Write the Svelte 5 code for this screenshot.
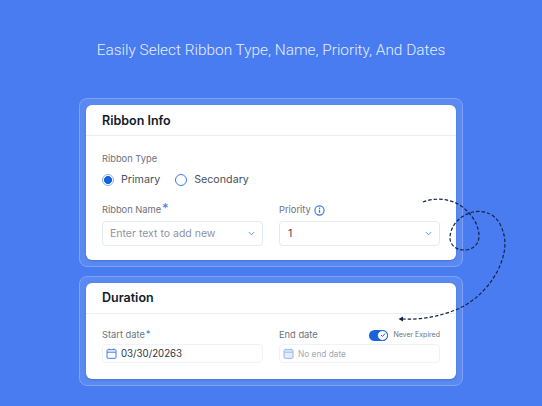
<script lang="ts">
  const typeOptions = [
    { label: 'Primary', checked: true },
    { label: 'Secondary', checked: false }
  ];
</script>

<main class="page">
  <h1>Easily Select Ribbon Type, Name, Priority, And Dates</h1>

  <section class="frame info-frame">
    <div class="card">
      <h2>Ribbon Info</h2>
      <div class="body info-body">
        <div class="label">Ribbon Type</div>
        <div class="radios">
          {#each typeOptions as opt}
            <span class="radio-item">
              <span class="radio" class:checked={opt.checked}></span>
              {opt.label}
            </span>
          {/each}
        </div>
        <div class="row">
          <div class="field">
            <div class="label label-line">Ribbon Name<span class="star big">*</span></div>
            <div class="select">
              <span class="placeholder">Enter text to add new</span>
              <svg class="chev" width="7" height="5" viewBox="0 0 8 5"><path d="M1 1l3 3 3-3" fill="none" stroke="#3b7de8" stroke-width="1"/></svg>
            </div>
          </div>
          <div class="field">
            <div class="label label-line">
              Priority
              <svg class="info" width="11" height="11" viewBox="0 0 11 11">
                <circle cx="5.5" cy="5.5" r="4.6" fill="none" stroke="#2f74e6" stroke-width="1.1"/>
                <path d="M5.5 4.800v3" stroke="#2f74e6" stroke-width="1.2"/>
                <circle cx="5.5" cy="3.300" r=".8" fill="#2f74e6"/>
              </svg>
            </div>
            <div class="select">
              <span class="value">1</span>
              <svg class="chev" width="7" height="5" viewBox="0 0 8 5"><path d="M1 1l3 3 3-3" fill="none" stroke="#3b7de8" stroke-width="1"/></svg>
            </div>
          </div>
        </div>
      </div>
    </div>
  </section>

  <section class="frame duration-frame">
    <div class="card">
      <h2 class="tight">Duration</h2>
      <div class="body row duration-body">
        <div class="field">
          <div class="label date-label">Start date<span class="star">*</span></div>
          <div class="date">
            <svg width="11" height="11" viewBox="0 0 11 11" fill="none" stroke="#3b7de8"><rect x="1" y="1.700" width="9" height="8.600" rx="1"/><path d="M1 4.200h9M3.200.5v1.500M7.800.5v1.500"/></svg>
            <span class="date-value">03/30/20263</span>
          </div>
        </div>
        <div class="field">
          <div class="label date-label end-line">
            End date
            <span class="never">
              <span class="toggle"><span class="knob"><svg width="6" height="6" viewBox="0 0 6 6"><path d="M1 3l1.500 1.500L5 1.500" fill="none" stroke="#1b63dc" stroke-width="1"/></svg></span></span>
              Never Expired
            </span>
          </div>
          <div class="date">
            <svg width="11" height="11" viewBox="0 0 11 11" fill="#e4edfb" stroke="#94b8ef"><rect x="1" y="1.700" width="9" height="8.600" rx="1"/><path d="M1 4.200h9M3.200.5v1.500M7.800.5v1.500"/></svg>
            <span class="no-end">No end date</span>
          </div>
        </div>
      </div>
    </div>
  </section>

  <svg class="swirl" width="542" height="406" viewBox="0 0 542 406" fill="none">
    <path d="M423 202C433 198 447 198 458 204C470 211 479 224 479 236C479 246 471 250 464 250C455 250 450 244 450 238C450 226 460 215 473 212C483 210 494 213 500 224C507 238 507 252 497 272C487 290 473 302 458 309C441 316 422 320 402 319" stroke="#14233f" stroke-width="1.2" stroke-dasharray="3.500 2"/>
    <path d="M398.500 319l4.500-2.500v5z" fill="#14233f"/>
  </svg>
</main>

<style>
  :global(body) {
    margin: 0;
    background: #487cf0;
  }

  .page {
    position: relative;
    width: 542px;
    height: 406px;
    overflow: hidden;
    background: #487cf0;
    font-family: Inter, 'Liberation Sans', sans-serif;
    display: flex;
    flex-direction: column;
    align-items: center;
  }

  h1 {
    margin: 41px 0 0;
    height: 18px;
    font: 300 15.4px/18px Roboto, sans-serif;
    color: #e6eeff;
    white-space: nowrap;
  }

  .frame {
    box-sizing: border-box;
    width: 384px;
    padding: 6px;
    background: #5a89f2;
    border: 1px solid #7ea3f6;
    border-radius: 8px;
  }

  .info-frame {
    margin-top: 39px;
    height: 169px;
  }

  .duration-frame {
    margin-top: 9px;
    height: 110px;
  }

  .card {
    height: 100%;
    background: #fff;
    border-radius: 6px;
    box-shadow: 0 1px 2px rgba(40, 80, 170, 0.4);
    overflow: hidden;
  }

  h2 {
    margin: 0;
    padding: 0 16px;
    font-size: 12.5px;
    font-weight: 600;
    color: #111a2c;
    border-bottom: 1px solid #e9eef6;
    height: 30px;
    line-height: 32px;
  }

  h2.tight {
    line-height: 30px;
  }

  .body {
    padding: 0 16px;
  }

  .info-body {
    padding-top: 17px;
  }

  .label {
    font-size: 9.3px;
    line-height: 12px;
    color: #6b7280;
  }

  .radios {
    display: flex;
    gap: 15px;
    margin-top: 8px;
    height: 14px;
    font-size: 10.7px;
    line-height: 14px;
    color: #49505c;
  }

  .radio-item {
    display: flex;
    align-items: center;
    gap: 7px;
  }

  .radio {
    box-sizing: border-box;
    width: 12px;
    height: 12px;
    border-radius: 50%;
    border: 1px solid #3b7de8;
    background: #fff;
  }

  .radio.checked {
    border-color: #8ab2f2;
    background: radial-gradient(circle, #1263e0 3.7px, #fff 4.3px);
  }

  .row {
    display: flex;
    gap: 16px;
  }

  .info-body .row {
    margin-top: 17px;
  }

  .field {
    width: 161px;
    flex: none;
  }

  .label-line {
    display: flex;
    align-items: center;
    gap: 3px;
    height: 12px;
    margin-bottom: 5px;
  }

  .star {
    color: #3b7de8;
    margin-left: 1px;
    align-self: flex-start;
    line-height: 9px;
  }

  .star.big {
    font-size: 13px;
    margin-left: -2px;
  }

  .select {
    box-sizing: border-box;
    height: 25px;
    display: flex;
    align-items: center;
    justify-content: space-between;
    padding: 0 7px;
    border: 1px solid #e2eaf7;
    border-radius: 4px;
    font-size: 10.5px;
  }

  .placeholder {
    color: #8d94a0;
  }

  .value {
    color: #3b4250;
    padding-left: 1px;
  }

  .chev {
    flex: none;
  }

  .duration-body {
    padding-top: 15px;
  }

  .date-label {
    margin-bottom: 3px;
    height: 12px;
    display: flex;
    align-items: center;
  }

  .end-line {
    justify-content: space-between;
  }

  .never {
    display: flex;
    align-items: center;
    gap: 5px;
    font-size: 7px;
    color: #6b7280;
  }

  .toggle {
    position: relative;
    width: 19px;
    height: 11px;
    border-radius: 6px;
    background: #1b63dc;
  }

  .knob {
    position: absolute;
    right: 0;
    top: 0;
    box-sizing: border-box;
    width: 11px;
    height: 11px;
    border-radius: 50%;
    background: #fff;
    border: 1px solid #1b63dc;
    display: flex;
    align-items: center;
    justify-content: center;
  }

  .date {
    box-sizing: border-box;
    height: 19px;
    display: flex;
    align-items: center;
    gap: 4px;
    padding: 0 3px;
    border: 1px solid #eef2f9;
    border-radius: 4px;
    font-size: 9.7px;
  }

  .date-value {
    color: #2d3440;
  }

  .no-end {
    color: #a3a9b4;
    font-size: 8.3px;
  }

  .swirl {
    position: absolute;
    left: 0;
    top: 0;
    pointer-events: none;
  }
</style>
